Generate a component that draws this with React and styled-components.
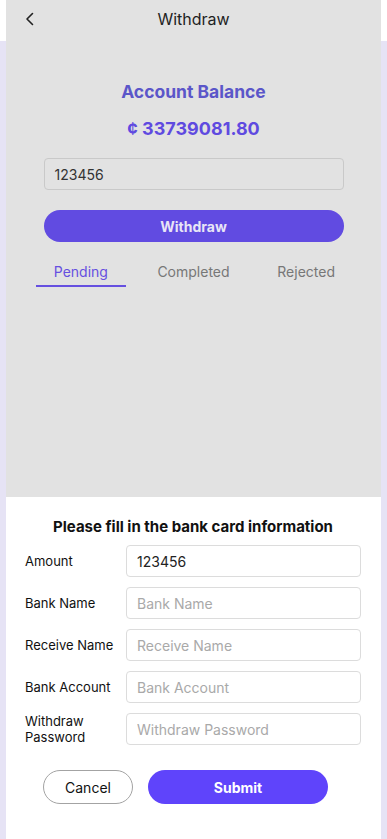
import React from "react";
import styled, { createGlobalStyle } from "styled-components";

const Global = createGlobalStyle`
  html, body { margin: 0; padding: 0; }
  body {
    font-family: Inter, "Noto Sans", "Liberation Sans", sans-serif;
    background: linear-gradient(#ffffff 0 41px, #e6e3f5 41px);
    min-height: 100vh;
  }
  * { box-sizing: border-box; }
`;

const Shell = styled.div`
  width: 375px;
  height: 100vh;
  margin: 0 auto;
  background: #e2e2e2;
  display: flex;
  flex-direction: column;
  overflow: hidden;
`;

const Header = styled.div`
  height: 41px;
  flex: none;
  display: grid;
  grid-template-columns: 40px 1fr 40px;
  align-items: center;
  color: #1f1f1f;
`;

const Back = styled.div`
  display: flex;
  align-items: center;
  padding-left: 19px;
  padding-bottom: 4px;
`;

const Title = styled.div`
  text-align: center;
  font-size: 16px;
  padding-bottom: 4px;
`;

const Balance = styled.div`
  display: flex;
  flex-direction: column;
  align-items: center;
  padding: 39px 37px 0;
`;

const BalanceLabel = styled.div`
  font-size: 17.5px;
  line-height: 24px;
  font-weight: 700;
  color: #5b56c9;
`;

const BalanceValue = styled.div`
  margin-top: 13px;
  font-size: 18px;
  line-height: 24px;
  font-weight: 700;
  color: #5f4ae0;
`;

const AmountBox = styled.div`
  margin-top: 17px;
  width: 300px;
  height: 32px;
  border: 1px solid #c9c9c9;
  border-radius: 4px;
  display: flex;
  align-items: center;
  padding: 0 10px;
  font-size: 14px;
  color: #333;
`;

const PrimaryWide = styled.div`
  margin-top: 20px;
  width: 300px;
  height: 32px;
  border-radius: 16px;
  background: #614be1;
  color: #e8e5f6;
  font-size: 14px;
  font-weight: 700;
  display: flex;
  align-items: center;
  justify-content: center;
`;

const Tabs = styled.div`
  margin-top: 17px;
  width: 338px;
  display: grid;
  grid-template-columns: 1fr 1fr 1fr;
  align-self: center;
`;

const Tab = styled.div`
  display: flex;
  flex-direction: column;
  align-items: center;
  font-size: 14px;
  line-height: 26px;
  color: ${(p) => (p.$active ? "#6650e0" : "#777777")};
  &::after {
    content: "";
    width: 90px;
    height: 2px;
    background: ${(p) => (p.$active ? "#6650e0" : "transparent")};
  }
`;

const Sheet = styled.div`
  margin-top: auto;
  height: 342px;
  flex: none;
  background: #ffffff;
  padding: 20px 20px 0 19px;
  display: flex;
  flex-direction: column;
`;

const SheetTitle = styled.div`
  text-align: center;
  font-size: 15px;
  line-height: 20px;
  font-weight: 700;
  color: #111;
  margin-bottom: 8px;
`;

const Rows = styled.div`
  display: flex;
  flex-direction: column;
  gap: 10px;
`;

const Row = styled.div`
  display: grid;
  grid-template-columns: 101px 1fr;
  align-items: center;
`;

const Label = styled.div`
  font-size: 13px;
  line-height: 16px;
  color: #111;
`;

const Field = styled.input`
  height: 32px;
  width: 100%;
  border: 1px solid #dcdcdc;
  border-radius: 4px;
  padding: 0 10px;
  font-family: inherit;
  font-size: 14px;
  color: #222;
  outline: none;
  background: #fff;
  &::placeholder { color: #a9a9a9; }
`;

const Actions = styled.div`
  margin-top: 25px;
  display: flex;
  gap: 15px;
  padding-left: 18px;
`;

const Button = styled.button`
  height: 34px;
  border-radius: 17px;
  font-family: inherit;
  font-size: 14px;
  cursor: pointer;
  border: ${(p) => (p.$primary ? "none" : "1px solid #a3a3a3")};
  background: ${(p) => (p.$primary ? "#5f44fb" : "#ffffff")};
  color: ${(p) => (p.$primary ? "#ffffff" : "#111111")};
  font-weight: ${(p) => (p.$primary ? 700 : 400)};
  width: ${(p) => p.$w}px;
`;

const fields = [
  { label: "Amount", value: "123456", ph: "" },
  { label: "Bank Name", value: "", ph: "Bank Name" },
  { label: "Receive Name", value: "", ph: "Receive Name" },
  { label: "Bank Account", value: "", ph: "Bank Account" },
  { label: "Withdraw Password", value: "", ph: "Withdraw Password" },
];

export default function App() {
  return (
    <>
      <Global />
      <Shell>
        <Header>
          <Back>
            <svg width="10" height="14" viewBox="0 0 10 14" fill="none">
              <path d="M7.5 1.5 L2 7 L7.5 12.5" stroke="#222" strokeWidth="1.6" strokeLinecap="round" strokeLinejoin="round" />
            </svg>
          </Back>
          <Title>Withdraw</Title>
          <div />
        </Header>
        <Balance>
          <BalanceLabel>Account Balance</BalanceLabel>
          <BalanceValue>¢ 33739081.80</BalanceValue>
          <AmountBox>123456</AmountBox>
          <PrimaryWide>Withdraw</PrimaryWide>
        </Balance>
        <Tabs>
          <Tab $active>Pending</Tab>
          <Tab>Completed</Tab>
          <Tab>Rejected</Tab>
        </Tabs>
        <Sheet>
          <SheetTitle>Please fill in the bank card information</SheetTitle>
          <Rows>
            {fields.map((f) => (
              <Row key={f.label}>
                <Label>{f.label === "Withdraw Password" ? <>Withdraw<br />Password</> : f.label}</Label>
                <Field defaultValue={f.value} placeholder={f.ph} />
              </Row>
            ))}
          </Rows>
          <Actions>
            <Button $w={90}>Cancel</Button>
            <Button $primary $w={180}>Submit</Button>
          </Actions>
        </Sheet>
      </Shell>
    </>
  );
}
